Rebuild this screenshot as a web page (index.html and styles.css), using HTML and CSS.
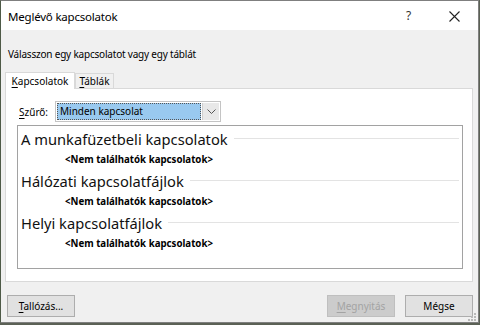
FILE: index.html
```html
<!DOCTYPE html>
<html>
<head>
  <title>Meglévő kapcsolatok</title>
  <link rel="stylesheet" href="styles.css">
</head>
<body>
  <div class="window">
    <!-- Title bar -->
    <div class="titlebar">
      <span class="title">Meglévő kapcsolatok</span>
      <span class="help">?</span>
      <span class="close">
        <svg width="11" height="11" viewBox="0 0 11 11">
          <path d="M0.5 0.5 L10.5 10.5 M10.5 0.5 L0.5 10.5" stroke="#222" stroke-width="1.1" fill="none"/>
        </svg>
      </span>
    </div>

    <div class="content">
      <p class="prompt">Válasszon egy kapcsolatot vagy egy táblát</p>

      <!-- Tabs -->
      <div class="tabs">
        <div class="tab active"><u>K</u>apcsolatok</div>
        <div class="tab"><u>T</u>áblák</div>
      </div>

      <div class="panel">
        <div class="filter">
          <label><u>S</u>zűrő:</label>
          <div class="select">
            <span class="value">Minden kapcsolat</span>
            <span class="arrow">
              <svg width="9" height="5" viewBox="0 0 9 5">
                <path d="M0.5 0.5 L4.5 4.5 L8.5 0.5" stroke="#555" stroke-width="1" fill="none"/>
              </svg>
            </span>
          </div>
        </div>

        <div class="list">
          <div class="group">
            <div class="group-head">A munkafüzetbeli kapcsolatok</div>
            <div class="empty">&lt;Nem találhatók kapcsolatok&gt;</div>
          </div>
          <div class="group">
            <div class="group-head">Hálózati kapcsolatfájlok</div>
            <div class="empty">&lt;Nem találhatók kapcsolatok&gt;</div>
          </div>
          <div class="group">
            <div class="group-head">Helyi kapcsolatfájlok</div>
            <div class="empty">&lt;Nem találhatók kapcsolatok&gt;</div>
          </div>
        </div>
      </div>

      <!-- Buttons -->
      <div class="buttons">
        <button class="btn"><u>T</u>allózás...</button>
        <span class="spacer"></span>
        <button class="btn disabled"><u>M</u>egnyitás</button>
        <button class="btn">Mégse</button>
      </div>

      <svg class="grip" width="9" height="9" viewBox="0 0 9 9">
        <rect x="6" y="0" width="2" height="2" fill="#b8b8b8"/>
        <rect x="3" y="3" width="2" height="2" fill="#b8b8b8"/>
        <rect x="6" y="3" width="2" height="2" fill="#b8b8b8"/>
        <rect x="0" y="6" width="2" height="2" fill="#b8b8b8"/>
        <rect x="3" y="6" width="2" height="2" fill="#b8b8b8"/>
        <rect x="6" y="6" width="2" height="2" fill="#b8b8b8"/>
      </svg>
    </div>
  </div>
</body>
</html>
```

FILE: styles.css
```css
* {
  box-sizing: border-box;
  font-family: "Noto Sans", "Open Sans", sans-serif;
}

body {
  margin: 0;
  background-color: #5b6155;
  color: #000;
}

u {
  text-decoration: underline;
  text-underline-offset: 2px;
}

.window {
  width: 479px;
  height: 323px;
  border: 1px solid #7f7f7f;
  border-left-color: #4e5a47;
  display: flex;
  flex-direction: column;
  background-color: #f0f0f0;
}

.titlebar {
  height: 29px;
  background-color: #fff;
  display: flex;
  align-items: center;
  padding-left: 7px;
}

.title {
  font-size: 11.5px;
  letter-spacing: -0.2px;
  flex: 1;
  padding-top: 1px;
}

.help {
  font-size: 12px;
  color: #333;
  width: 45px;
  text-align: center;
}

.close {
  width: 47px;
  display: flex;
  justify-content: center;
  padding-top: 1px;
}

.content {
  flex: 1;
  position: relative;
  display: flex;
  flex-direction: column;
}

.prompt {
  font-size: 10px;
  letter-spacing: -0.2px;
  margin: 16px 0 0 7px;
  line-height: 16px;
}

.tabs {
  display: flex;
  align-items: flex-end;
  margin: 9px 0 0 4px;
  height: 17px;
}

.tab {
  font-size: 10px;
  height: 15px;
  line-height: 14px;
  width: 39px;
  text-align: center;
  border: 1px solid #d9d9d9;
  border-bottom: none;
  background-color: #f0f0f0;
}

.tab.active {
  height: 17px;
  line-height: 16px;
  background-color: #fff;
  position: relative;
  top: 1px;
  width: 70px;
}

.panel {
  margin-left: 4px;
  width: 468px;
  height: 194px;
  border: 1px solid #d9d9d9;
  background-color: #fff;
  padding: 12px 0 0 11px;
}

.filter {
  display: flex;
  align-items: center;
  height: 21px;
}

.filter label {
  font-size: 10px;
  width: 38px;
  padding-left: 2px;
}

.select {
  width: 166px;
  height: 21px;
  border: 1px solid #c4c4c4;
  display: flex;
  padding: 1px;
  background-color: #fff;
}

.select .value {
  flex: 1;
  background-color: #99c9ef;
  border: 1px dotted #555;
  font-size: 10px;
  line-height: 15px;
  padding-left: 2px;
}

.select .arrow {
  width: 17px;
  margin-left: 1px;
  background-color: #e8e8e8;
  border-left: 1px solid #d0d0d0;
  display: flex;
  align-items: center;
  justify-content: center;
}

.list {
  margin-top: 3px;
  width: 446px;
  height: 144px;
  border: 1px solid #a2a2a2;
  padding: 4px 0 0 0;
  display: flex;
  flex-direction: column;
  gap: 4px;
}

.group-head {
  display: flex;
  align-items: flex-start;
  font-size: 14.7px;
  line-height: 22px;
  padding-left: 3px;
  margin: -2px 0 2px 0;
  color: #111;
}

.group-head::after {
  content: "";
  flex: 1;
  height: 1px;
  background-color: #e3e3e3;
  margin: 10px 3px 0 6px;
}

.empty {
  font-size: 9.7px;
  font-weight: bold;
  line-height: 16px;
  padding-left: 47px;
}

.buttons {
  display: flex;
  margin: 13px 0 0 6px;
  gap: 10px;
}

.spacer {
  flex: 1;
}

.btn {
  width: 68px;
  height: 22px;
  font-size: 10px;
  background-color: #e1e1e1;
  border: 1px solid #adadad;
  color: #000;
  padding: 0;
}

.btn.disabled {
  background-color: #cccccc;
  border-color: #bfbfbf;
  color: #a3a3a3;
}

.btn:last-child {
  margin-right: 5px;
}

.grip {
  position: absolute;
  right: 1px;
  bottom: 0;
}
```
